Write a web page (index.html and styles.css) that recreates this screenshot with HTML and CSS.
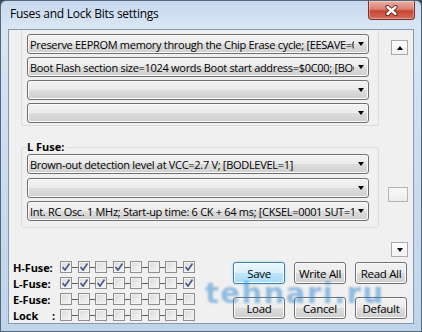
FILE: index.html
```html
<!DOCTYPE html>
<html lang="en">
<head>
  <meta charset="UTF-8">
  <meta name="viewport" content="width=device-width, initial-scale=1.0">
  <title>Fuses and Lock Bits settings</title>
  <link rel="stylesheet" href="styles.css">
</head>
<body>
  <div class="window">
    <div class="titlebar">
      <span class="title">Fuses and Lock Bits settings</span>
      <button class="close-btn" aria-label="Close">
        <svg width="13" height="11" viewBox="0 0 13 11">
          <path d="M2.5 2 L10.5 9 M10.5 2 L2.5 9" stroke="#5a1f17" stroke-width="4.2" stroke-linecap="round"/>
          <path d="M2.5 2 L10.5 9 M10.5 2 L2.5 9" stroke="#ffffff" stroke-width="2.4" stroke-linecap="round"/>
        </svg>
      </button>
    </div>

    <div class="client">
      <div class="panel">
        <div class="panel-content">
          <!-- H fuse group, scrolled so its top is out of view -->
          <div class="group group-cut">
            <div class="combo"><span class="combo-text">Preserve EEPROM memory through the Chip Erase cycle; [EESAVE=0]</span><span class="combo-arrow"></span></div>
            <div class="combo"><span class="combo-text">Boot Flash section size=1024 words Boot start address=$0C00; [BOOTSZ=00]</span><span class="combo-arrow"></span></div>
            <div class="combo"><span class="combo-text"></span><span class="combo-arrow"></span></div>
            <div class="combo"><span class="combo-text"></span><span class="combo-arrow"></span></div>
          </div>

          <fieldset class="group group-l">
            <legend>L Fuse:</legend>
            <div class="combo"><span class="combo-text">Brown-out detection level at VCC=2.7 V; [BODLEVEL=1]</span><span class="combo-arrow"></span></div>
            <div class="combo"><span class="combo-text"></span><span class="combo-arrow"></span></div>
            <div class="combo"><span class="combo-text">Int. RC Osc. 1 MHz; Start-up time: 6 CK + 64 ms; [CKSEL=0001 SUT=10]</span><span class="combo-arrow"></span></div>
          </fieldset>
        </div>

        <div class="scrollbar">
          <div class="scroll-btn"><span class="tri-up"></span></div>
          <div class="scroll-thumb"></div>
          <div class="scroll-btn scroll-down"><span class="tri-down"></span></div>
        </div>
      </div>

      <div class="bottom">
        <div class="bits">
          <div class="bit-row">
            <span class="bit-label">H-Fuse:</span>
            <span class="bit on"></span><span class="dash"></span>
            <span class="bit on"></span><span class="dash"></span>
            <span class="bit"></span><span class="dash"></span>
            <span class="bit on"></span><span class="dash"></span>
            <span class="bit"></span><span class="dash"></span>
            <span class="bit"></span><span class="dash"></span>
            <span class="bit"></span><span class="dash"></span>
            <span class="bit on"></span>
          </div>
          <div class="bit-row">
            <span class="bit-label">L-Fuse:</span>
            <span class="bit on"></span><span class="dash"></span>
            <span class="bit on"></span><span class="dash"></span>
            <span class="bit on"></span><span class="dash"></span>
            <span class="bit"></span><span class="dash"></span>
            <span class="bit"></span><span class="dash"></span>
            <span class="bit"></span><span class="dash"></span>
            <span class="bit"></span><span class="dash"></span>
            <span class="bit on"></span>
          </div>
          <div class="bit-row">
            <span class="bit-label">E-Fuse:</span>
            <span class="bit"></span><span class="dash"></span>
            <span class="bit"></span><span class="dash"></span>
            <span class="bit"></span><span class="dash"></span>
            <span class="bit"></span><span class="dash"></span>
            <span class="bit"></span><span class="dash"></span>
            <span class="bit"></span><span class="dash"></span>
            <span class="bit"></span><span class="dash"></span>
            <span class="bit"></span>
          </div>
          <div class="bit-row">
            <span class="bit-label"><span>Lock</span><span>:</span></span>
            <span class="bit"></span><span class="dash"></span>
            <span class="bit"></span><span class="dash"></span>
            <span class="bit"></span><span class="dash"></span>
            <span class="bit"></span><span class="dash"></span>
            <span class="bit"></span><span class="dash"></span>
            <span class="bit"></span><span class="dash"></span>
            <span class="bit"></span><span class="dash"></span>
            <span class="bit"></span>
          </div>
        </div>

        <div class="buttons">
          <button class="btn btn-default">Save</button>
          <button class="btn">Write All</button>
          <button class="btn">Read All</button>
          <button class="btn">Load</button>
          <button class="btn">Cancel</button>
          <button class="btn">Default</button>
        </div>
      </div>
    </div>

    <div class="watermark">tehnari.ru</div>
  </div>
</body>
</html>
```

FILE: styles.css
```css
* {
  box-sizing: border-box;
}

body {
  margin: 0;
  width: 422px;
  height: 332px;
  overflow: hidden;
  font-family: "Open Sans", "Noto Sans", sans-serif;
  font-size: 11px;
  color: #000;
  background: #3b4a5a;
}

/* Aero style window frame */
.window {
  position: relative;
  width: 422px;
  height: 332px;
  display: flex;
  flex-direction: column;
  background: linear-gradient(to bottom, #c6d9ee 0%, #d9e6f4 8%, #cddef0 40%, #bfd4eb 100%);
  border: 1px solid #55677b;
  border-radius: 6px 6px 0 0;
}

.titlebar {
  height: 28px;
  display: flex;
  align-items: flex-start;
  padding-left: 9px;
}

.title {
  margin-top: 5px;
  font-size: 12px;
  line-height: 16px;
  letter-spacing: -0.25px;
}

.close-btn {
  margin-left: auto;
  margin-right: 6px;
  width: 47px;
  height: 19px;
  padding: 0;
  display: flex;
  align-items: center;
  justify-content: center;
  border: 1px solid #7c2e24;
  border-top: none;
  border-radius: 0 0 4px 4px;
  background: linear-gradient(to bottom, #eab0a6 0%, #dc8072 45%, #c64532 55%, #d36e5b 100%);
  box-shadow: inset 0 0 0 1px rgba(255, 255, 255, 0.35);
}

.client {
  flex: 1;
  margin: 0 7px 7px;
  background: #f0f0f0;
  border: 1px solid #8799ae;
  display: flex;
  flex-direction: column;
}

/* Scrollable fuse list */
.panel {
  height: 229px;
  display: flex;
}

.panel-content {
  flex: 1;
  min-width: 0;
  overflow: hidden;
  padding: 0 9px 0 12px;
}

.group {
  border: 1px solid #d5dfe5;
  border-radius: 3px;
  min-width: 0;
  margin: 0;
  display: flex;
  flex-direction: column;
}

.group-cut {
  border-top: none;
  border-radius: 0 0 3px 3px;
  padding: 4px 9px 2px 5px;
  gap: 3px;
}

.group-l {
  margin-top: 14px;
  padding: 0 9px 6px 5px;
  gap: 3.5px;
}

.group-l legend {
  padding: 0 2px 0 0;
  font-weight: bold;
  line-height: 14px;
}

.combo {
  height: 20px;
  display: flex;
  align-items: center;
  border: 1px solid #707070;
  border-radius: 3px;
  background: linear-gradient(to bottom, #f2f2f2 0%, #ebebeb 50%, #dddddd 50%, #cfcfcf 100%);
  box-shadow: inset 0 0 0 1px #fbfbfb;
}

.combo-text {
  flex: 1;
  overflow: hidden;
  white-space: nowrap;
  padding-left: 2px;
  letter-spacing: -0.3px;
}

.combo-arrow {
  width: 14px;
  display: flex;
  justify-content: center;
}

.combo-arrow::before,
.tri-down {
  content: "";
  width: 0;
  height: 0;
  border-left: 3.5px solid transparent;
  border-right: 3.5px solid transparent;
  border-top: 4px solid #000;
}

.tri-up {
  width: 0;
  height: 0;
  border-left: 3.5px solid transparent;
  border-right: 3.5px solid transparent;
  border-bottom: 4px solid #000;
}

.scrollbar {
  width: 20px;
  margin-right: 5px;
  padding: 10px 0 2px;
  display: flex;
  flex-direction: column;
}

.scroll-btn {
  align-self: flex-end;
  width: 17px;
  height: 15px;
  display: flex;
  align-items: center;
  justify-content: center;
  border: 1px solid #a9a9a9;
  background: linear-gradient(to bottom, #fdfdfd, #f1f1f1);
}

.scroll-thumb {
  margin-top: 132px;
  height: 15px;
  border: 1px solid #b4b4b4;
  background: linear-gradient(to bottom, #f9f9f9, #ececec);
}

.scroll-down {
  margin-top: auto;
}

/* Fuse bit checkboxes and buttons */
.bottom {
  flex: 1;
  display: flex;
}

.bits {
  padding-left: 4px;
}

.bit-row {
  height: 16px;
  display: flex;
  align-items: center;
}

.bit-label {
  width: 42px;
  margin-right: 5px;
  display: flex;
  justify-content: space-between;
  font-weight: bold;
  font-size: 11px;
  letter-spacing: -0.1px;
}

.bit {
  width: 12px;
  height: 12px;
  border: 1px solid #8e8f8f;
  background: linear-gradient(135deg, #dadada, #f6f6f6);
  box-shadow: inset 0 0 0 1px #f2f2f2;
}

.bit.on {
  background-image: url("data:image/svg+xml,%3Csvg xmlns='http://www.w3.org/2000/svg' width='10' height='10'%3E%3Cpath d='M1.5 5 L4 8 L8.5 1.5' fill='none' stroke='%234a5d8c' stroke-width='1.7'/%3E%3C/svg%3E"), linear-gradient(135deg, #dadada, #f6f6f6);
  background-position: center;
  background-repeat: no-repeat;
}

.dash {
  width: 5.5px;
  height: 1px;
  background: #5c5c5c;
}

.buttons {
  margin-left: auto;
  margin-right: 6px;
  padding-top: 3px;
  display: grid;
  grid-template-columns: repeat(3, 52px);
  column-gap: 9px;
  row-gap: 13px;
  align-content: start;
}

.btn {
  height: 22px;
  padding: 0;
  font-family: "Open Sans", "Noto Sans", sans-serif;
  font-size: 11.5px;
  letter-spacing: -0.3px;
  color: #000;
  border: 1px solid #707070;
  border-radius: 3px;
  background: linear-gradient(to bottom, #f2f2f2 0%, #ebebeb 50%, #dddddd 50%, #cfcfcf 100%);
  box-shadow: inset 0 0 0 1px #fcfcfc;
}

.btn-default {
  border-color: #3c7fb1;
  background: linear-gradient(to bottom, #eaf6fd 0%, #d9f0fc 50%, #bee6fd 50%, #a7d9f5 100%);
  box-shadow: inset 0 0 0 1px #ffffff, 0 0 2px #7fc4ee;
}

/* site watermark printed over the screenshot */
.watermark {
  position: absolute;
  left: 204px;
  top: 275px;
  font-family: "DejaVu Sans", sans-serif;
  font-weight: bold;
  font-size: 29px;
  letter-spacing: 1.5px;
  color: rgba(50, 135, 210, 0.5);
  filter: blur(0.8px);
  pointer-events: none;
}
```
